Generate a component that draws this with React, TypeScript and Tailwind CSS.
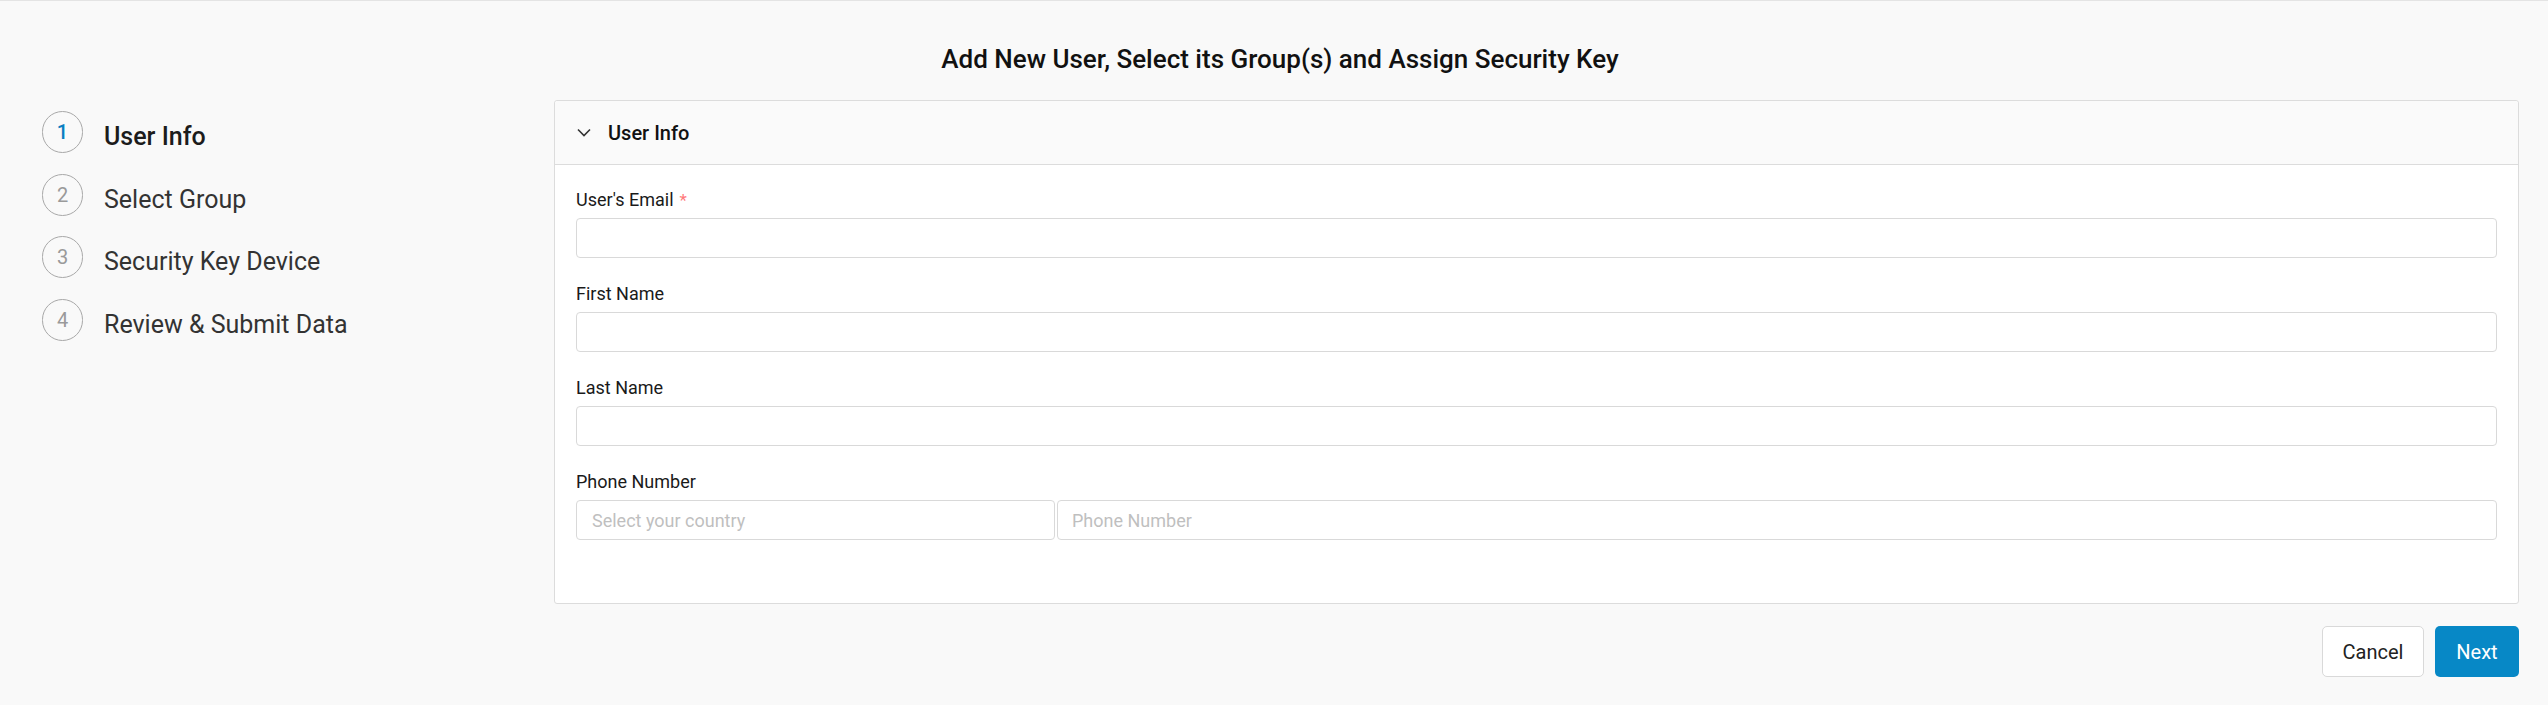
import React from "react";

const steps = [
  { n: 1, label: "User Info", active: true },
  { n: 2, label: "Select Group", active: false },
  { n: 3, label: "Security Key Device", active: false },
  { n: 4, label: "Review & Submit Data", active: false },
];

function Field({ label, required }: { label: string; required?: boolean }) {
  return (
    <div className="mb-[24px]">
      <div className="text-[18px] leading-[24px] text-[#1a1a1a] mb-[6px] flex items-center">
        <span>{label}</span>
        {required && <span className="ml-[6px] text-[#ff7a7a] text-[17px]">*</span>}
      </div>
      <input className="block w-full h-[40px] border border-[#d9d9d9] rounded-[4px] bg-white px-[15px] text-[18px] outline-none" />
    </div>
  );
}

export default function App() {
  return (
    <div className="min-h-screen bg-[#f9f9f9] border-t border-[#e4e4e4] font-['Roboto','Liberation_Sans',sans-serif]">
      <h1 className="pt-[42px] text-center text-[26px] leading-[32px] font-medium text-[#111] pl-[12px]">
        Add New User, Select its Group(s) and Assign Security Key
      </h1>
      <div className="flex items-start mt-[25px]">
        <div className="w-[554px] shrink-0 pl-[42px] pt-[11px] flex flex-col gap-[20.5px]">
          {steps.map((s) => (
            <div key={s.n} className="flex items-start gap-[21px]">
              <div
                className={
                  "w-[41px] h-[42px] rounded-full border border-[#a8a8a8] flex items-center justify-center text-[20px] shrink-0 " +
                  (s.active ? "text-[#0a7ec2] font-medium" : "text-[#9a9a9a]")
                }
              >
                {s.n}
              </div>
              <div
                className={
                  "mt-[12px] text-[25px] leading-[28px] " +
                  (s.active ? "text-[#1c1c1c] font-medium" : "text-[#333]")
                }
              >
                {s.label}
              </div>
            </div>
          ))}
        </div>
        <div className="flex-1 mr-[29px]">
          <div className="border border-[#dcdcdc] rounded-[3px] bg-white">
            <div className="h-[64px] bg-[#fafafa] border-b border-[#dcdcdc] flex items-center px-[22px] rounded-t-[3px]">
              <svg width="14" height="9" viewBox="0 0 14 9" className="shrink-0">
                <polyline points="1,1.5 7,7.5 13,1.5" fill="none" stroke="#333" strokeWidth="1.6" />
              </svg>
              <span className="ml-[17px] text-[20px] leading-[24px] font-medium text-[#111]">User Info</span>
            </div>
            <div className="px-[21px] pt-[23px] pb-[39px]">
              <Field label="User's Email" required />
              <Field label="First Name" />
              <Field label="Last Name" />
              <div className="mb-[24px]">
                <div className="text-[18px] leading-[24px] text-[#1a1a1a] mb-[6px]">Phone Number</div>
                <div className="flex gap-[2px]">
                  <div className="w-[479px] h-[40px] border border-[#d9d9d9] rounded-[4px] bg-white px-[15px] flex items-center text-[18px] text-[#bfbfbf]">
                    Select your country
                  </div>
                  <input
                    placeholder="Phone Number"
                    className="flex-1 h-[40px] border border-[#d9d9d9] rounded-[4px] bg-white px-[14px] text-[18px] outline-none placeholder:text-[#bfbfbf]"
                  />
                </div>
              </div>
            </div>
          </div>
          <div className="flex justify-end gap-[11px] mt-[22px]">
            <button className="w-[102px] h-[51px] border border-[#d9d9d9] rounded-[5px] bg-white text-[20px] text-[#222]">
              Cancel
            </button>
            <button className="w-[84px] h-[51px] rounded-[5px] bg-[#0788c6] text-[20px] text-white">
              Next
            </button>
          </div>
        </div>
      </div>
    </div>
  );
}
